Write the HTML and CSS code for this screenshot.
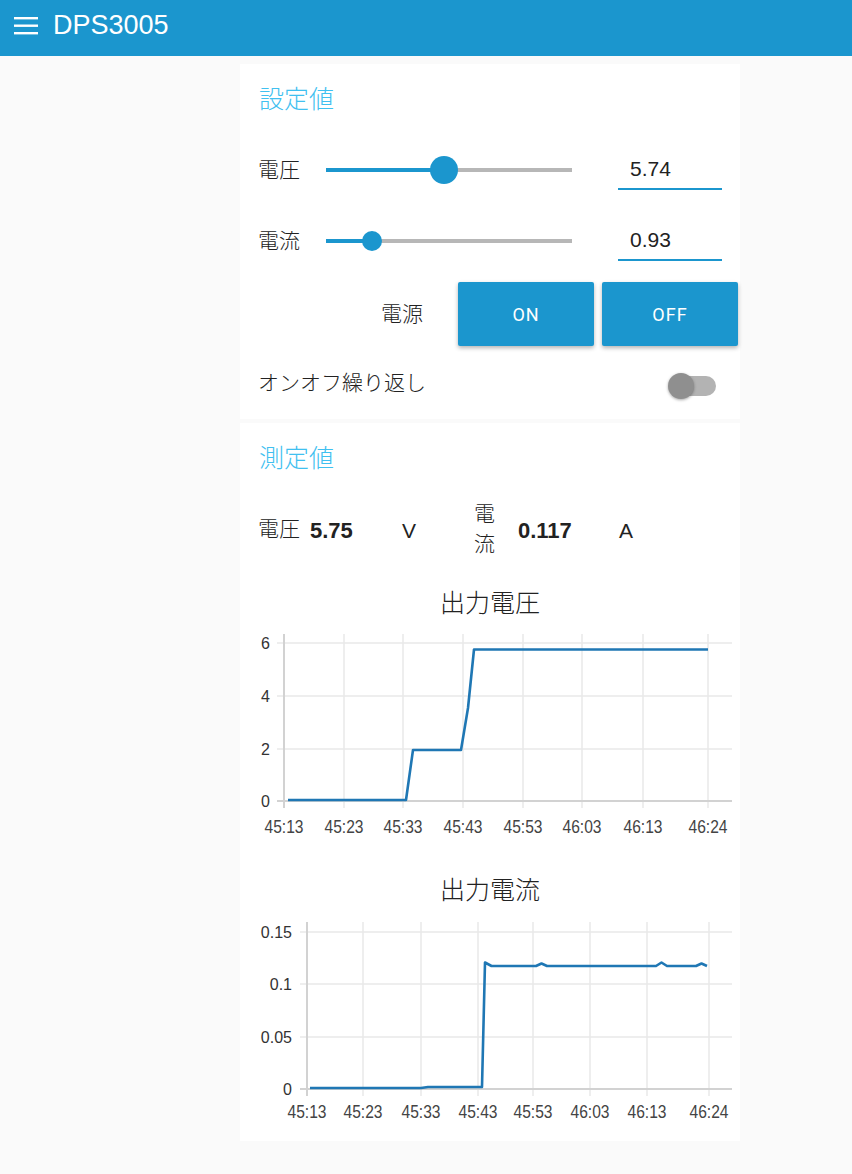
FILE: index.html
```html
<!DOCTYPE html>
<html lang="ja">
<head>
    <meta charset="UTF-8">
    <meta name="viewport" content="width=device-width, initial-scale=1.0">
    <title>DPS3005</title>
    <link rel="stylesheet" href="styles.css">
</head>
<body>
    <header class="toolbar">
        <svg class="menu-icon" width="24" height="18" viewBox="0 0 24 18">
            <rect x="0" y="0" width="24" height="2.4" fill="#fff"/>
            <rect x="0" y="7.5" width="24" height="2.4" fill="#fff"/>
            <rect x="0" y="15" width="24" height="2.4" fill="#fff"/>
        </svg>
        <span class="toolbar-title">DPS3005</span>
    </header>

    <main class="content">
        <!-- 設定値 -->
        <section class="card settings">
            <h2 class="card-title">設定値</h2>

            <div class="slider-row">
                <span class="label">電圧</span>
                <div class="slider">
                    <div class="slider-fill" style="width: 47.8%"></div>
                    <div class="slider-thumb active" style="left: 47.8%"></div>
                </div>
                <div class="num-input">5.74</div>
            </div>

            <div class="slider-row">
                <span class="label">電流</span>
                <div class="slider">
                    <div class="slider-fill" style="width: 18.6%"></div>
                    <div class="slider-thumb" style="left: 18.6%"></div>
                </div>
                <div class="num-input">0.93</div>
            </div>

            <div class="power-row">
                <span class="label power-label">電源</span>
                <button type="button" class="btn">ON</button>
                <button type="button" class="btn">OFF</button>
            </div>

            <div class="toggle-row">
                <span class="label">オンオフ繰り返し</span>
                <div class="switch">
                    <div class="switch-track"></div>
                    <div class="switch-thumb"></div>
                </div>
            </div>
        </section>

        <!-- 測定値 -->
        <section class="card measure">
            <h2 class="card-title">測定値</h2>

            <div class="meas-row">
                <span class="label meas-name">電圧</span>
                <span class="meas-value meas-v">5.75</span>
                <span class="meas-unit meas-vu">V</span>
                <span class="label meas-name narrow">電流</span>
                <span class="meas-value meas-a">0.117</span>
                <span class="meas-unit">A</span>
            </div>

            <h3 class="chart-title">出力電圧</h3>
            <svg class="chart" width="500" height="220" viewBox="0 0 500 220">
                <g class="grid">
                    <line x1="37" y1="18" x2="492" y2="18"/>
                    <line x1="37" y1="71" x2="492" y2="71"/>
                    <line x1="37" y1="124" x2="492" y2="124"/>
                    <line x1="104" y1="9" x2="104" y2="183"/>
                    <line x1="163" y1="9" x2="163" y2="183"/>
                    <line x1="223" y1="9" x2="223" y2="183"/>
                    <line x1="283" y1="9" x2="283" y2="183"/>
                    <line x1="342" y1="9" x2="342" y2="183"/>
                    <line x1="403" y1="9" x2="403" y2="183"/>
                    <line x1="468" y1="9" x2="468" y2="183"/>
                </g>
                <g class="axis">
                    <line x1="37" y1="176" x2="492" y2="176"/>
                    <line x1="44" y1="9" x2="44" y2="183"/>
                </g>
                <g class="y-labels">
                    <text x="30" y="24">6</text>
                    <text x="30" y="77">4</text>
                    <text x="30" y="130">2</text>
                    <text x="30" y="182">0</text>
                </g>
                <g class="x-labels">
                    <text x="44" y="208" textLength="39" lengthAdjust="spacingAndGlyphs">45:13</text>
                    <text x="104" y="208" textLength="39" lengthAdjust="spacingAndGlyphs">45:23</text>
                    <text x="163" y="208" textLength="39" lengthAdjust="spacingAndGlyphs">45:33</text>
                    <text x="223" y="208" textLength="39" lengthAdjust="spacingAndGlyphs">45:43</text>
                    <text x="283" y="208" textLength="39" lengthAdjust="spacingAndGlyphs">45:53</text>
                    <text x="342" y="208" textLength="39" lengthAdjust="spacingAndGlyphs">46:03</text>
                    <text x="403" y="208" textLength="39" lengthAdjust="spacingAndGlyphs">46:13</text>
                    <text x="468" y="208" textLength="39" lengthAdjust="spacingAndGlyphs">46:24</text>
                </g>
                <polyline class="series" points="48,175 166,175 173,125 221,125 228,83 234,24.5 468,24.5"/>
            </svg>

            <h3 class="chart-title">出力電流</h3>
            <svg class="chart" width="500" height="220" viewBox="0 0 500 220">
                <g class="grid">
                    <line x1="60" y1="22" x2="492" y2="22"/>
                    <line x1="60" y1="74" x2="492" y2="74"/>
                    <line x1="60" y1="127" x2="492" y2="127"/>
                    <line x1="123" y1="12" x2="123" y2="186"/>
                    <line x1="181" y1="12" x2="181" y2="186"/>
                    <line x1="238" y1="12" x2="238" y2="186"/>
                    <line x1="293" y1="12" x2="293" y2="186"/>
                    <line x1="350" y1="12" x2="350" y2="186"/>
                    <line x1="407" y1="12" x2="407" y2="186"/>
                    <line x1="469" y1="12" x2="469" y2="186"/>
                </g>
                <g class="axis">
                    <line x1="60" y1="179" x2="492" y2="179"/>
                    <line x1="67" y1="12" x2="67" y2="186"/>
                </g>
                <g class="y-labels">
                    <text x="52" y="28">0.15</text>
                    <text x="52" y="80">0.1</text>
                    <text x="52" y="133">0.05</text>
                    <text x="52" y="185">0</text>
                </g>
                <g class="x-labels">
                    <text x="67" y="208" textLength="39" lengthAdjust="spacingAndGlyphs">45:13</text>
                    <text x="123" y="208" textLength="39" lengthAdjust="spacingAndGlyphs">45:23</text>
                    <text x="181" y="208" textLength="39" lengthAdjust="spacingAndGlyphs">45:33</text>
                    <text x="238" y="208" textLength="39" lengthAdjust="spacingAndGlyphs">45:43</text>
                    <text x="293" y="208" textLength="39" lengthAdjust="spacingAndGlyphs">45:53</text>
                    <text x="350" y="208" textLength="39" lengthAdjust="spacingAndGlyphs">46:03</text>
                    <text x="407" y="208" textLength="39" lengthAdjust="spacingAndGlyphs">46:13</text>
                    <text x="469" y="208" textLength="39" lengthAdjust="spacingAndGlyphs">46:24</text>
                </g>
                <polyline class="series" points="70,178 181,178 188,177 242,177 245,52.5 251.5,56 296,56 301.5,53.5 307,56 416,56 421.5,52.5 427,56 456,56 461.5,53.5 467,56"/>
            </svg>
        </section>
    </main>
</body>
</html>
```

FILE: styles.css
```css
body {
    margin: 0;
    padding: 0;
    background: #fafafa;
    color: #222;
    font-family: "Liberation Sans", "Noto Sans CJK JP", sans-serif;
}

.toolbar {
    display: flex;
    align-items: center;
    height: 56px;
    padding: 0 0 5px 14px;
    box-sizing: border-box;
    background: #1b96ce;
    color: white;
}

.menu-icon {
    display: block;
    margin-right: 15px;
}

.toolbar-title {
    font-size: 27px;
    line-height: 1;
}

.content {
    display: flex;
    flex-direction: column;
    align-items: flex-start;
    gap: 4px;
    padding: 8px 0 0 240px;
}

.card {
    width: 500px;
    background: white;
    box-sizing: border-box;
}

.card-title {
    margin: 0;
    padding: 17px 20px 0 19px;
    font-size: 25px;
    font-weight: 300;
    line-height: 36px;
    color: #40c0f0;
}

.label {
    font-size: 21px;
    font-weight: 300;
    line-height: 30px;
    color: #222;
}

/* sliders */
.slider-row {
    display: flex;
    align-items: center;
    height: 71px;
    padding: 0 18px;
}

.settings .card-title {
    margin-bottom: 17px;
}

.slider-row .label {
    width: 68px;
}

.slider {
    position: relative;
    width: 246px;
    height: 4px;
    background: #b7b7b7;
}

.slider-fill {
    height: 100%;
    background: #1b96ce;
}

.slider-thumb {
    position: absolute;
    top: 50%;
    width: 20px;
    height: 20px;
    border-radius: 50%;
    background: #1b96ce;
    transform: translate(-50%, -50%);
}

.slider-thumb.active {
    width: 28px;
    height: 28px;
}

.num-input {
    margin-left: auto;
    width: 92px;
    height: 38px;
    padding-left: 12px;
    border-bottom: 2px solid #1b96ce;
    font-size: 21px;
    line-height: 38px;
    color: #222;
}

/* power buttons */
.power-row {
    display: flex;
    align-items: center;
    justify-content: flex-end;
    gap: 8px;
    margin-top: 6px;
    padding-right: 2px;
}

.power-label {
    margin-right: 27px;
}

.btn {
    width: 136px;
    height: 64px;
    border: none;
    border-radius: 2px;
    background: #1b96ce;
    color: white;
    font-family: Roboto, "Liberation Sans", sans-serif;
    font-size: 18px;
    letter-spacing: 1px;
    box-shadow: 0 2px 4px rgba(0, 0, 0, 0.3);
    cursor: pointer;
}

/* toggle */
.toggle-row {
    display: flex;
    align-items: center;
    justify-content: space-between;
    height: 73px;
    padding: 0 24px 0 18px;
}

.switch {
    position: relative;
    width: 48px;
    height: 28px;
    margin-top: 6px;
}

.switch-track {
    position: absolute;
    left: 4px;
    right: 0;
    top: 4px;
    height: 20px;
    border-radius: 10px;
    background: #b3b3b3;
}

.switch-thumb {
    position: absolute;
    left: 0;
    top: 1px;
    width: 26px;
    height: 26px;
    border-radius: 50%;
    background: #8f8f8f;
    box-shadow: 0 1px 3px rgba(0, 0, 0, 0.35);
}

/* measurements */
.measure {
    padding-bottom: 11px;
}

.meas-row {
    display: flex;
    align-items: center;
    height: 60px;
    margin-top: 23px;
    padding-left: 18px;
}

.meas-name {
    width: 52px;
}

.meas-name.narrow {
    width: 22px;
    margin-right: 22px;
}

.meas-value {
    font-size: 22px;
    font-weight: bold;
    color: #222;
    padding-top: 3px;
}

.meas-v {
    width: 92px;
}

.meas-vu {
    width: 72px;
}

.meas-a {
    width: 101px;
}

.meas-unit {
    font-size: 21px;
    color: #222;
    padding-top: 3px;
}

/* charts */
.chart-title {
    margin: 27px 0 5px;
    font-size: 25px;
    font-weight: 300;
    line-height: 34px;
    text-align: center;
    color: #222;
}

.chart + .chart-title {
    margin-top: 28px;
    margin-bottom: 3px;
}

.chart {
    display: block;
}

.chart .grid line {
    stroke: #e8e8e8;
    stroke-width: 1.5;
}

.chart .axis line {
    stroke: #d2d2d2;
    stroke-width: 2;
}

.chart text {
    font-family: "Liberation Sans", sans-serif;
}

.chart .y-labels text {
    font-size: 16px;
    fill: #333;
    text-anchor: end;
}

.chart .x-labels text {
    font-size: 19px;
    fill: #444;
    text-anchor: middle;
}

.chart .series {
    fill: none;
    stroke: #1f77b4;
    stroke-width: 2.6;
    stroke-linejoin: round;
}
```
